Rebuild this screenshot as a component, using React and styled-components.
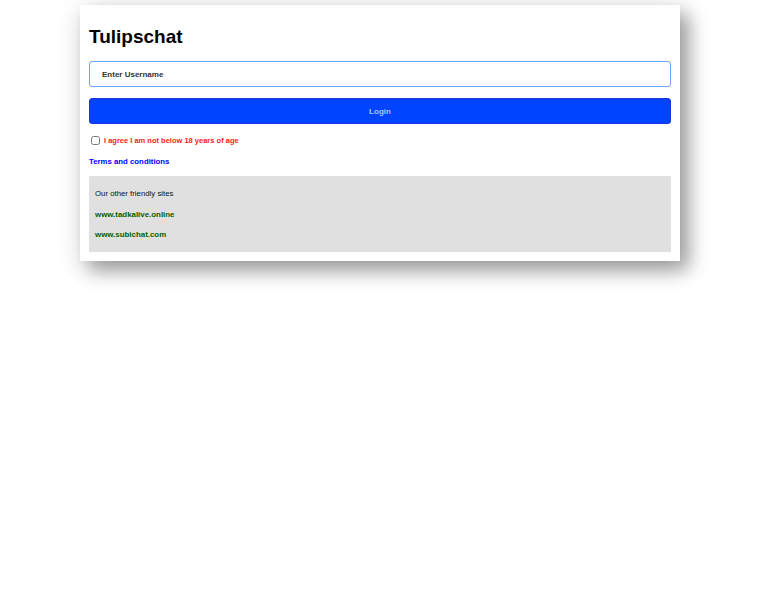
import React from "react";
import styled, { createGlobalStyle } from "styled-components";

const GlobalStyle = createGlobalStyle`
  body {
    margin: 0;
    background: #ffffff;
    font-family: "Liberation Sans", Arial, sans-serif;
  }
`;

function App() {
  return (
    <>
      <GlobalStyle />
      <Page>
        <Card>
          <Title>Tulipschat</Title>
          <Input placeholder="Enter Username" />
          <Button>Login</Button>
          <AgreeRow>
            <Check type="checkbox" />
            <AgreeLabel>I agree I am not below 18 years of age</AgreeLabel>
          </AgreeRow>
          <TermsLink href="#">Terms and conditions</TermsLink>
          <Friends>
            <FriendsTitle>Our other friendly sites</FriendsTitle>
            <FriendLink href="#">www.tadkalive.online</FriendLink>
            <FriendLink href="#">www.subichat.com</FriendLink>
          </Friends>
        </Card>
      </Page>
    </>
  );
}

export default App;

const Page = styled.div`
  display: flex;
  justify-content: center;
  align-items: flex-start;
  padding: 5px 0 60px 0;
`;

const Card = styled.div`
  width: 600px;
  box-sizing: border-box;
  padding: 19px 9px 9px 9px;
  background: #fff;
  display: flex;
  flex-direction: column;
  box-shadow: 9px 9px 18px rgba(0, 0, 0, 0.35), 0 6px 24px rgba(0, 0, 0, 0.12);
`;

const Title = styled.h1`
  margin: 0 0 11px 0;
  font-size: 19px;
  line-height: 26px;
  font-weight: bold;
  color: #000;
`;

const Input = styled.input`
  height: 26px;
  box-sizing: border-box;
  border: 1.5px solid #6aa6ff;
  border-radius: 3px;
  padding: 0 12px;
  font-family: "Liberation Sans", Arial, sans-serif;
  font-size: 8px;
  font-weight: bold;
  outline: none;

  &::placeholder {
    color: #333;
  }
`;

const Button = styled.button`
  margin-top: 11px;
  height: 26px;
  background: #0044ff;
  border: 1px solid #2233dd;
  border-radius: 3px;
  color: #a9c4f5;
  font-family: "Liberation Sans", Arial, sans-serif;
  font-size: 8px;
  font-weight: bold;
`;

const AgreeRow = styled.label`
  margin-top: 11px;
  display: flex;
  align-items: center;
  height: 10px;
`;

const Check = styled.input`
  width: 9px;
  height: 9px;
  margin: 0 4px 0 2px;
`;

const AgreeLabel = styled.span`
  color: #ff1a1a;
  font-size: 7.5px;
  font-weight: bold;
`;

const TermsLink = styled.a`
  margin-top: 12px;
  align-self: flex-start;
  color: #0000ff;
  font-size: 7.8px;
  font-weight: bold;
  text-decoration: none;
  line-height: 10px;
`;

const Friends = styled.div`
  margin-top: 9px;
  background: #e0e0e0;
  padding: 13px 6px 12px 6px;
  display: flex;
  flex-direction: column;
  gap: 10.5px;
`;

const FriendsTitle = styled.div`
  font-size: 7.8px;
  color: #111;
  line-height: 10px;
`;

const FriendLink = styled.a`
  align-self: flex-start;
  color: #006400;
  font-size: 7.9px;
  font-weight: bold;
  text-decoration: none;
  line-height: 10px;
`;
